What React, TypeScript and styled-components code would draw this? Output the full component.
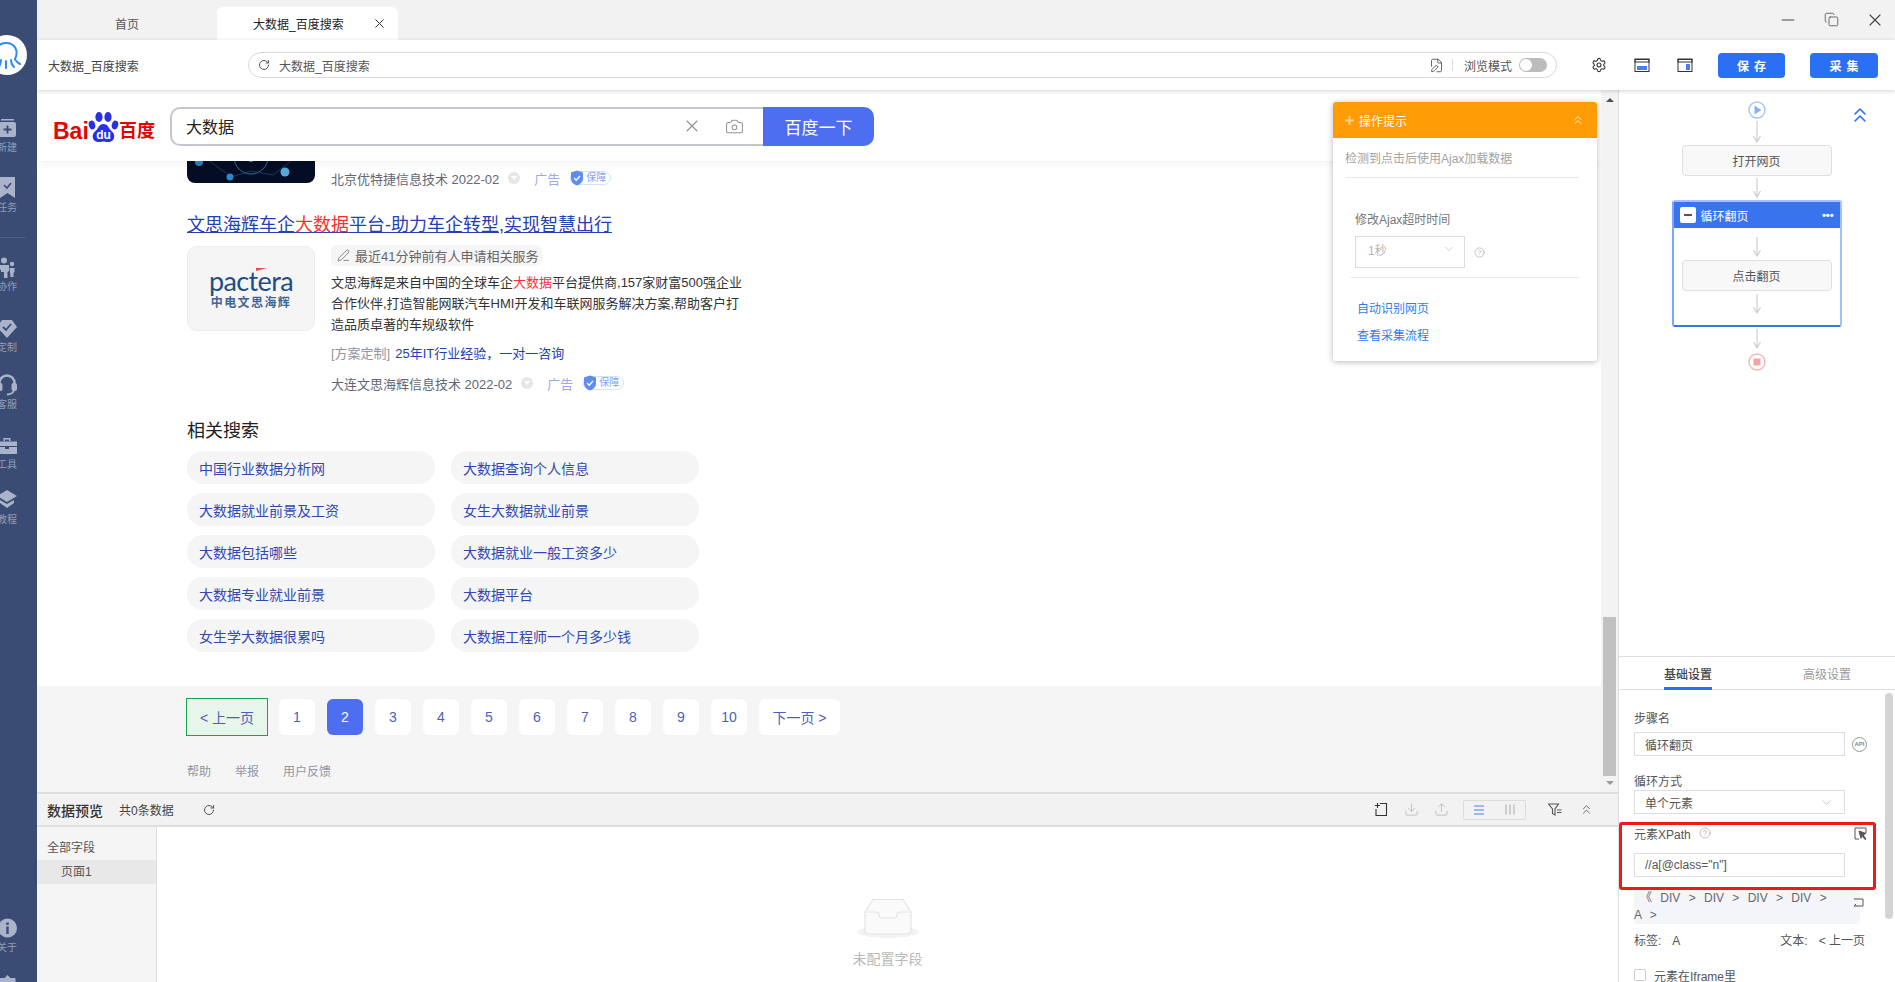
import styled, { createGlobalStyle } from "styled-components";
import {
  X,
  Minus,
  Copy,
  RotateCw,
  Settings,
  FilePen,
  Camera,
  ChevronsUp,
  ChevronDown,
  CircleHelp,
  PenLine,
  Download,
  Upload,
} from "lucide-react";

const FONT = `"Liberation Sans", "Noto Sans CJK SC", sans-serif`;

const GlobalStyle = createGlobalStyle`
  html, body {
    margin: 0;
    height: 100%;
    overflow: hidden;
    background: #fff;
    font-family: ${FONT};
    font-size: 12px;
    color: #333;
  }
  #root { height: 100%; }
  * { box-sizing: border-box; }
`;

const Shell = styled.div`
  display: flex;
  width: 100%;
  height: 982px;
  overflow: hidden;
`;

/* ---------- left rail ---------- */

const Rail = styled.nav`
  width: 37px;
  flex: none;
  height: 100%;
  background: #3a4c73;
  overflow: hidden;
  position: relative;
  z-index: 5;
`;

const RailInner = styled.div`
  display: flex;
  flex-direction: column;
  width: 38px;
  height: 100%;
  margin-left: -12px;
  padding-top: 35px;
`;

const LogoDisc = styled.div`
  width: 40px;
  height: 40px;
  margin-left: -1px;
  margin-bottom: 41px;
  border-radius: 50%;
  background: #fff;
  flex: none;
  display: flex;
  align-items: center;
  justify-content: center;
`;

const RailItem = styled.div<{ $after?: number }>`
  display: flex;
  flex-direction: column;
  align-items: center;
  flex: none;
  margin-bottom: ${(p) => p.$after ?? 21}px;
  color: #a9b3c9;
`;

const RailIcon = styled.div`
  height: 24px;
  display: flex;
  align-items: center;
  justify-content: center;
`;

const RailLabel = styled.span`
  font-size: 10px;
  line-height: 14px;
  margin-top: 1px;
  white-space: nowrap;
  color: #929db8;
`;

const RailRule = styled.div`
  height: 1px;
  width: 38px;
  background: #4d5e83;
  margin-bottom: 17px;
  flex: none;
`;

const RailBottom = styled.div`
  margin-top: auto;
  margin-bottom: -14px;
`;

/* ---------- workspace chrome ---------- */

const Workspace = styled.div`
  flex: 1;
  min-width: 0;
  display: flex;
  flex-direction: column;
`;

const TabBar = styled.div`
  height: 40px;
  flex: none;
  background: #f2f2f2;
  display: flex;
  align-items: flex-end;
`;

const Tab = styled.div<{ $active?: boolean }>`
  width: ${(p) => (p.$active ? 181 : 180)}px;
  height: 33px;
  display: flex;
  align-items: center;
  justify-content: ${(p) => (p.$active ? "flex-start" : "center")};
  padding-left: ${(p) => (p.$active ? 36 : 0)}px;
  font-size: 12px;
  background: ${(p) => (p.$active ? "#fff" : "transparent")};
  border-radius: 6px 6px 0 0;
  color: ${(p) => (p.$active ? "#222" : "#555")};
  svg {
    margin-left: 28px;
    color: #333;
  }
`;

const WindowButtons = styled.div`
  margin-left: auto;
  height: 100%;
  display: flex;
  align-items: center;
  gap: 23px;
  padding: 0 10px 1px 0;
  color: #444;
`;

const Toolbar = styled.div`
  height: 50px;
  flex: none;
  background: #fff;
  display: flex;
  align-items: center;
  box-shadow: 0 1px 4px rgba(0, 0, 0, 0.18);
  position: relative;
  z-index: 3;
`;

const PageName = styled.div`
  width: 211px;
  padding-left: 11px;
  font-size: 12px;
  color: #444;
`;

const AddressPill = styled.div`
  width: 1309px;
  height: 26px;
  flex: none;
  border: 1px solid #d9d9d9;
  border-radius: 13px;
  display: flex;
  align-items: center;
  padding: 0 9px 0 9px;
  font-size: 12px;
  color: #555;
`;

const AddressText = styled.span`
  margin-left: 9px;
  flex: 1;
`;

const PillRule = styled.span`
  width: 1px;
  height: 12px;
  background: #ddd;
  margin: 0 11px 0 8px;
`;

const Toggle = styled.span`
  width: 28px;
  height: 14px;
  border-radius: 7px;
  background: #bcbcbc;
  margin-left: 7px;
  padding: 1px;
  display: flex;
  &::before {
    content: "";
    width: 12px;
    height: 12px;
    border-radius: 50%;
    background: #fff;
  }
`;

const ToolIcons = styled.div`
  display: flex;
  align-items: center;
  margin-left: 34px;
  gap: 27px;
  color: #333;
`;

const PrimaryButton = styled.button<{ $gap: number; $w: number }>`
  width: ${(p) => p.$w}px;
  height: 25px;
  margin-left: ${(p) => p.$gap}px;
  border: 0;
  border-radius: 4px;
  background: #2a6ff5;
  color: #fff;
  font-family: ${FONT};
  font-size: 12px;
  font-weight: 700;
  letter-spacing: 5px;
  padding: 0 0 0 5px;
`;

const Body = styled.div`
  flex: 1;
  min-height: 0;
  display: flex;
`;

const LeftPane = styled.div`
  width: 1581px;
  flex: none;
  display: flex;
  flex-direction: column;
`;

const BrowserArea = styled.div`
  height: 702px;
  flex: none;
  display: flex;
`;

const Viewport = styled.div`
  flex: 1;
  min-width: 0;
  position: relative;
  display: flex;
  flex-direction: column;
  overflow: hidden;
`;

const ScrollTrack = styled.div`
  width: 17px;
  flex: none;
  background: #f3f3f3;
  display: flex;
  flex-direction: column;
  align-items: center;
  padding: 8px 0 7px;
`;

const ScrollThumb = styled.div`
  width: 13px;
  height: 159px;
  margin-top: auto;
  background: #c1c1c1;
`;

const ArrowUp = styled.div`
  width: 0;
  height: 0;
  border-left: 4px solid transparent;
  border-right: 4px solid transparent;
  border-bottom: 4px solid #505050;
`;

const ArrowDown = styled.div`
  width: 0;
  height: 0;
  margin-top: 5px;
  border-left: 4px solid transparent;
  border-right: 4px solid transparent;
  border-top: 4px solid #9a9a9a;
`;

/* ---------- baidu page ---------- */

const BaiduHeader = styled.div`
  height: 71px;
  flex: none;
  display: flex;
  align-items: center;
  padding: 1px 0 0 16px;
  background: #fff;
  box-shadow: 0 2px 8px rgba(0, 0, 0, 0.06);
  position: relative;
  z-index: 2;
`;

const BaiduLogo = styled.div`
  width: 117px;
  height: 36px;
  display: flex;
  align-items: flex-end;
  color: #e10602;
  font-weight: 700;
  flex: none;
`;

const LogoLatin = styled.span`
  font-size: 23px;
  line-height: 26px;
  width: 35px;
  flex: none;
`;

const LogoHan = styled.span`
  font-size: 18px;
  line-height: 25px;
  white-space: nowrap;
`;

const SearchBox = styled.div`
  width: 593px;
  height: 39px;
  border: 2px solid #c4c7ce;
  border-right: 0;
  border-radius: 10px 0 0 10px;
  display: flex;
  align-items: center;
  padding: 0 19px 0 14px;
  font-size: 16px;
  color: #222;
`;

const SearchText = styled.span`
  flex: 1;
`;

const SearchAction = styled.span`
  display: flex;
  color: #919399;
  margin-left: 23px;
`;

const SearchButton = styled.div`
  width: 111px;
  height: 39px;
  background: #4e6ef2;
  color: #fff;
  font-size: 17px;
  border-radius: 0 10px 10px 0;
  display: flex;
  align-items: center;
  justify-content: center;
`;

const Results = styled.div`
  flex: 1;
  min-height: 0;
  padding-left: 150px;
`;

const TopResult = styled.div`
  display: flex;
  height: 27px;
`;

const DarkThumb = styled.div`
  width: 128px;
  height: 22px;
  background: #050d24;
  border-radius: 0 0 8px 8px;
  overflow: hidden;
  flex: none;
`;

const MetaLine = styled.div`
  display: flex;
  align-items: center;
  height: 22px;
  font-size: 13px;
  color: #626675;
  white-space: nowrap;
`;

const TopMeta = styled(MetaLine)`
  margin: 7px 0 0 16px;
  height: 20px;
`;

const Dot = styled.span`
  width: 12px;
  height: 12px;
  margin-left: 9px;
  border-radius: 50%;
  background: #e6e6e6;
  display: flex;
  align-items: center;
  justify-content: center;
  &::after {
    content: "";
    border-left: 3px solid transparent;
    border-right: 3px solid transparent;
    border-top: 4px solid #fff;
  }
`;

const AdMark = styled.span`
  margin-left: 14px;
  color: #9fa9ec;
  font-size: 13px;
`;

const GuardBadge = styled.span`
  margin-left: 10px;
  height: 14px;
  padding: 0 4px 0 15px;
  border: 1px solid #d5e3ff;
  border-radius: 7px;
  position: relative;
  font-size: 10px;
  line-height: 12px;
  color: #7fa3f5;
  svg {
    position: absolute;
    left: -1px;
    top: -2px;
  }
`;

const ResultTitle = styled.a`
  display: block;
  margin-top: 25px;
  font-size: 18px;
  line-height: 24px;
  color: #2440b3;
  text-decoration: underline;
`;

const Hit = styled.span`
  color: #f73131;
`;

const ResultCard = styled.div`
  display: flex;
  gap: 16px;
  margin-top: 8px;
`;

const BrandTile = styled.div`
  width: 128px;
  height: 85px;
  margin-top: 1px;
  flex: none;
  background: #f5f5f6;
  border: 1px solid #ececec;
  border-radius: 10px;
  display: flex;
  flex-direction: column;
  align-items: center;
  justify-content: center;
  color: #1f4e87;
  position: relative;
`;

const BrandName = styled.span`
  font-size: 27px;
  line-height: 28px;
  letter-spacing: -0.6px;
  font-family: "Lato", sans-serif;
`;

const BrandSub = styled.span`
  font-size: 12px;
  line-height: 16px;
  font-weight: 700;
  letter-spacing: 1.4px;
  opacity: 0.85;
`;

const BrandFlag = styled.span`
  position: absolute;
  left: 68px;
  top: 21px;
  border-top: 3px solid #e84b4b;
  border-right: 11px solid transparent;
`;

const CardBody = styled.div`
  width: 420px;
`;

const ActivityTag = styled.div`
  display: inline-flex;
  align-items: center;
  height: 21px;
  padding: 0 4px 0 6px;
  gap: 5px;
  background: #f5f5f6;
  border-radius: 6px;
  font-size: 13px;
  color: #666;
  vertical-align: top;
`;

const Abstract = styled.p`
  margin: 6px 0 0;
  font-size: 13px;
  line-height: 21px;
  color: #333;
`;

const PromoLine = styled.div`
  margin-top: 8px;
  font-size: 13px;
  line-height: 21px;
  color: #9195a3;
  a {
    color: #2440b3;
    margin-left: 5px;
  }
`;

const CardMeta = styled(MetaLine)`
  margin-top: 8px;
`;

const RelatedTitle = styled.h3`
  margin: 25px 0 0;
  font-size: 18px;
  font-weight: 400;
  line-height: 24px;
  color: #222;
`;

const RelatedGrid = styled.div`
  margin-top: 8px;
  display: grid;
  grid-template-columns: 248px 248px;
  column-gap: 16px;
  row-gap: 9px;
`;

const RelatedPill = styled.a`
  height: 33px;
  border-radius: 16px;
  background: #f5f5f6;
  padding-left: 12px;
  display: flex;
  align-items: center;
  font-size: 14px;
  color: #3148b0;
`;

const PageFooter = styled.div`
  height: 106px;
  flex: none;
  background: #f5f5f6;
  padding: 12px 0 0 149px;
`;

const Pager = styled.div`
  display: flex;
  align-items: center;
  gap: 12px;
`;

const PageButton = styled.a<{ $current?: boolean }>`
  width: 36px;
  height: 36px;
  border-radius: 6px;
  background: ${(p) => (p.$current ? "#4e6ef2" : "#fff")};
  color: ${(p) => (p.$current ? "#fff" : "#4e5fb8")};
  font-size: 14px;
  display: flex;
  align-items: center;
  justify-content: center;
`;

const PrevButton = styled.a`
  width: 82px;
  height: 38px;
  margin-right: -1px;
  border: 1px solid #12a84a;
  background: #e8f5ea;
  color: #4e5fb8;
  font-size: 14px;
  display: flex;
  align-items: center;
  justify-content: center;
`;

const NextButton = styled(PageButton)`
  width: 81px;
`;

const FooterLinks = styled.div`
  margin-top: 26px;
  display: flex;
  gap: 24px;
  font-size: 12px;
  color: #9195a3;
  padding-left: 1px;
`;

/* ---------- tips popover ---------- */

const TipsCard = styled.aside`
  position: absolute;
  left: 1296px;
  top: 12px;
  width: 264px;
  height: 259px;
  background: #fff;
  border-radius: 3px;
  box-shadow: 0 1px 6px rgba(0, 0, 0, 0.28);
  z-index: 4;
`;

const TipsHead = styled.div`
  height: 36px;
  background: #ff9b05;
  border-radius: 3px 3px 0 0;
  color: #fff;
  font-size: 12px;
  display: flex;
  align-items: center;
  justify-content: space-between;
  padding: 0 12px;
`;

const TipsHeadLeft = styled.span`
  display: flex;
  align-items: center;
  gap: 5px;
  color: #fff;
  svg {
    opacity: 0.55;
  }
`;

const TipsNote = styled.div`
  margin: 0 18px 0 12px;
  height: 40px;
  border-bottom: 1px solid #e8e8e8;
  display: flex;
  align-items: center;
  font-size: 12px;
  color: #a3a3a3;
  white-space: nowrap;
`;

const TipsLabel = styled.div`
  margin: 34px 0 0 22px;
  font-size: 12px;
  line-height: 16px;
  color: #777;
`;

const TipsSelectRow = styled.div`
  display: flex;
  align-items: center;
  margin: 8px 0 0 22px;
  gap: 9px;
  color: #999;
`;

const TipsSelect = styled.div`
  width: 110px;
  height: 32px;
  border: 1px solid #ddd;
  display: flex;
  align-items: center;
  justify-content: space-between;
  padding: 0 8px 6px 12px;
  font-size: 12px;
  color: #b5b5b5;
`;

const TipsRule = styled.div`
  margin: 9px 18px 0;
  height: 1px;
  background: #e8e8e8;
`;

const TipsLink = styled.a<{ $first?: boolean }>`
  display: block;
  margin: ${(p) => (p.$first ? 23 : 11)}px 0 0 24px;
  font-size: 12px;
  line-height: 16px;
  color: #2f7bf0;
`;

/* ---------- data preview ---------- */

const Preview = styled.section`
  flex: 1;
  min-height: 0;
  display: flex;
  flex-direction: column;
`;

const PreviewHead = styled.div`
  height: 35px;
  flex: none;
  background: #f2f2f2;
  border-top: 2px solid #dedede;
  border-bottom: 2px solid #dedede;
  display: flex;
  align-items: center;
  padding-left: 10px;
`;

const PreviewTitle = styled.strong`
  font-size: 14px;
  font-weight: 500;
  color: #333;
`;

const PreviewCount = styled.span`
  margin-left: 16px;
  font-size: 12px;
  color: #444;
`;

const RefreshSlot = styled.span`
  display: flex;
  margin-left: 29px;
  color: #555;
`;

const PreviewTools = styled.div`
  margin-left: auto;
  display: flex;
  align-items: center;
  padding-right: 24px;
`;

const ToolSlot = styled.span<{ $left: number; $muted?: boolean }>`
  display: flex;
  margin-left: ${(p) => p.$left}px;
  color: ${(p) => (p.$muted ? "#b4b4b4" : "#333")};
`;

const Segmented = styled.div`
  width: 63px;
  height: 20px;
  margin-left: 14px;
  border: 1px solid #dcdcdc;
  border-radius: 2px;
  display: grid;
  grid-template-columns: 1fr 1fr;
  align-items: center;
  justify-items: center;
`;

const PreviewBody = styled.div`
  flex: 1;
  min-height: 0;
  display: flex;
`;

const FieldColumn = styled.div`
  width: 120px;
  flex: none;
  background: #f5f5f5;
  border-right: 1px solid #dedede;
  padding-top: 12px;
  font-size: 12px;
  color: #555;
`;

const FieldAll = styled.div`
  height: 18px;
  line-height: 18px;
  padding-left: 10px;
`;

const FieldRow = styled.div`
  margin-top: 3px;
  height: 24px;
  line-height: 24px;
  padding-left: 24px;
  background: #e8e8e8;
`;

const EmptyState = styled.div`
  flex: 1;
  display: flex;
  flex-direction: column;
  align-items: center;
  padding-top: 72px;
  font-size: 14px;
  color: #b9b9b9;
  gap: 9px;
`;

/* ---------- right column ---------- */

const RightPane = styled.div`
  flex: 1;
  min-width: 0;
  border-left: 1px solid #dedede;
  display: flex;
  flex-direction: column;
  position: relative;
  overflow: hidden;
`;

const FlowCanvas = styled.div`
  height: 566px;
  flex: none;
  position: relative;
  display: flex;
  flex-direction: column;
  align-items: center;
  padding: 11px 1px 0 0;
`;

const CollapseFlow = styled.span`
  position: absolute;
  left: 229px;
  top: 13px;
  display: flex;
  color: #2a6ff5;
`;

const FlowStep = styled.div<{ $inner?: boolean }>`
  width: 150px;
  height: 31px;
  flex: none;
  margin-top: ${(p) => (p.$inner ? -6 : 0)}px;
  border: 1px solid #dfdfdf;
  border-radius: 4px;
  background: #f8f8f8;
  display: flex;
  align-items: center;
  justify-content: center;
  font-size: 12px;
  color: #555;
`;

const LoopBox = styled.div`
  width: 170px;
  height: 127px;
  flex: none;
  border: 2px solid #3a73ee;
  border-top-color: #a5c0f7;
  border-left-color: #7fa5f3;
  border-right-color: #a5c0f7;
  border-radius: 3px;
  display: flex;
  flex-direction: column;
  align-items: center;
`;

const LoopHead = styled.div`
  width: 100%;
  height: 26px;
  flex: none;
  background: #3a73ee;
  color: #fff;
  font-size: 12px;
  display: flex;
  align-items: center;
  padding: 0 6px;
  gap: 5px;
`;

const LoopToggle = styled.span`
  width: 16px;
  height: 16px;
  background: #fff;
  border-radius: 2px;
  display: flex;
  align-items: center;
  justify-content: center;
  &::after {
    content: "";
    width: 8px;
    height: 2px;
    background: #555;
  }
`;

const LoopMenu = styled.span`
  margin-left: auto;
  font-size: 11px;
  font-weight: 700;
  line-height: 8px;
`;

const SettingsTabs = styled.div`
  height: 34px;
  flex: none;
  border-top: 1px solid #dedede;
  border-bottom: 1px solid #dedede;
  display: flex;
  font-size: 12px;
  padding-left: 45px;
`;

const SettingsTab = styled.div<{ $active?: boolean }>`
  height: 33px;
  width: 48px;
  margin-right: 91px;
  display: flex;
  align-items: center;
  white-space: nowrap;
  color: ${(p) => (p.$active ? "#444" : "#999")};
  font-weight: ${(p) => (p.$active ? 500 : 400)};
  border-bottom: 3px solid ${(p) => (p.$active ? "#2a6ff5" : "transparent")};
  padding-top: 3px;
`;

const Form = styled.div`
  flex: 1;
  min-height: 0;
  padding: 21px 0 0 15px;
  font-size: 12px;
  color: #555;
  position: relative;
`;

const FieldLabel = styled.div<{ $top?: number; $bottom?: number }>`
  height: 16px;
  line-height: 16px;
  margin-top: ${(p) => p.$top ?? 0}px;
  margin-bottom: ${(p) => p.$bottom ?? 0}px;
  color: #555;
`;

const FieldRowLine = styled.div`
  display: flex;
  align-items: center;
  gap: 7px;
  color: #999;
`;

const TextField = styled.div`
  width: 211px;
  height: 24px;
  border: 1px solid #dedede;
  padding: 0 10px 0 10px;
  display: flex;
  align-items: center;
  justify-content: space-between;
  font-size: 12px;
  color: #555;
  background: #fff;
  flex: none;
`;

const ApiBadge = styled.span`
  width: 15px;
  height: 15px;
  border: 1px solid #999;
  border-radius: 50%;
  display: flex;
  align-items: center;
  justify-content: center;
  font-size: 6px;
  font-weight: 700;
  color: #888;
`;

const HighlightBox = styled.div`
  width: 257px;
  height: 68px;
  margin: 8px 0 0 -15px;
  padding: 0 0 0 12px;
  border: 3px solid #f01a14;
  border-radius: 3px;
  position: relative;
  z-index: 1;
`;

const XPathHead = styled.div`
  height: 16px;
  margin-bottom: 12px;
  display: flex;
  align-items: center;
  justify-content: space-between;
  padding-right: 6px;
`;

const XPathName = styled.span`
  display: flex;
  align-items: center;
  gap: 8px;
  color: #999;
  span {
    color: #555;
  }
`;

const Crumbs = styled.div`
  width: 226px;
  height: 34px;
  background: #f4f5f9;
  border-radius: 0 0 4px 4px;
  position: relative;
  font-size: 12px;
  line-height: 17px;
  color: #667;
`;

const CrumbLine = styled.div<{ $indent?: number }>`
  height: 17px;
  padding-left: ${(p) => p.$indent ?? 0}px;
  white-space: nowrap;
  word-spacing: 5px;
`;

const CrumbReturn = styled.span`
  position: absolute;
  right: -4px;
  top: 8px;
  display: flex;
  color: #555;
`;

const InfoRow = styled.div`
  width: 231px;
  height: 16px;
  line-height: 16px;
  margin-top: 9px;
  display: flex;
  justify-content: space-between;
`;

const InfoValue = styled.span`
  margin-left: 11px;
`;

const CheckRow = styled.label`
  margin-top: 18px;
  display: flex;
  align-items: center;
  gap: 8px;
  height: 16px;
`;

const CheckBox = styled.span`
  width: 12px;
  height: 12px;
  border: 1px solid #ccc;
  border-radius: 2px;
`;

const FormScroll = styled.div`
  position: absolute;
  right: 2px;
  top: 3px;
  width: 8px;
  height: 226px;
  border-radius: 4px;
  background: #d4d4d4;
`;

/* ---------- drawings ---------- */

const OctopusMark = () => (
  <svg width="36" height="36" viewBox="0 0 36 36" fill="none" stroke="#2e8bf0" strokeWidth="2" strokeLinecap="round">
    <path d="M8 22C4 14 8 6 17 6s13 8 9 16" />
    <path d="M8 22c-1 3-3 4-4 6M12 23c0 3-1 5-2 7M17 24v7M22 23c0 3 1 5 3 7M26 22c1 3 3 4 5 5" />
  </svg>
);

const Paw = () => (
  <svg width="31" height="32" viewBox="0 0 31 32" style={{ flex: "none" }}>
    <g fill="#2932e1">
      <ellipse cx="4" cy="13" rx="3.2" ry="4.5" transform="rotate(-15 4 13)" />
      <ellipse cx="11" cy="5" rx="3.6" ry="5" />
      <ellipse cx="20" cy="5" rx="3.6" ry="5" />
      <ellipse cx="27" cy="13" rx="3.2" ry="4.5" transform="rotate(15 27 13)" />
      <path d="M15.5 12c5 0 5 5 9 8 4 4 1 11-5 10-2-.3-2.800-.6-4-.6s-2 .3-4 .6c-6 1-9-6-5-10 4-3 4-8 9-8z" />
    </g>
    <text x="15.500" y="27" textAnchor="middle" fontSize="12" fontWeight="700" fontFamily="Liberation Sans, sans-serif" fill="#fff">
      du
    </text>
  </svg>
);

const NetworkArt = () => (
  <svg width="128" height="22" viewBox="0 0 128 22" fill="none">
    <circle cx="64" cy="-4" r="17" stroke="#2e6f9e" strokeWidth="1" />
    <path d="M22 0l20 14M104 0L86 14M44 16l20-6 22 4" stroke="#1f4e75" strokeWidth="0.7" />
    <circle cx="12" cy="1" r="4" fill="#2f7fc4" />
    <circle cx="43" cy="16" r="3.500" fill="#2f86cc" />
    <circle cx="98" cy="11" r="4.500" fill="#58a8d8" />
    <circle cx="64" cy="-2" r="3" fill="#3a86b8" />
  </svg>
);

const Shield = () => (
  <svg width="14" height="16" viewBox="0 0 14 16">
    <path d="M7 .5l6 2v6c0 3.500-3 6-6 7-3-1-6-3.500-6-7v-6z" fill="#5e8df2" />
    <path d="M4 8l2.200 2.200L10 6" fill="none" stroke="#fff" strokeWidth="1.300" />
  </svg>
);

const Arrow = ({ h = 20, m = 2 }: { h?: number; m?: number }) => (
  <svg width="10" height={h} viewBox={`0 0 10 ${h}`} style={{ margin: `${m}px 0`, flex: "none" }} fill="none" stroke="#cfcfcf" strokeWidth="1.200">
    <path d={`M5 0v${h - 1}M1.500 ${h - 7}L5 ${h - 1}l3.500-6`} />
  </svg>
);

const StartNode = () => (
  <svg width="18" height="18" viewBox="0 0 18 18" style={{ flex: "none" }}>
    <circle cx="9" cy="9" r="8" fill="#fff" stroke="#a9c4f6" strokeWidth="1.400" />
    <path d="M6.500 4.500v9l7-4.500z" fill="#8db1f5" />
  </svg>
);

const StopNode = () => (
  <svg width="18" height="18" viewBox="0 0 18 18" style={{ flex: "none", marginTop: 2 }}>
    <circle cx="9" cy="9" r="8" fill="#fff" stroke="#f4b8b8" strokeWidth="1.400" />
    <rect x="5.500" y="5.500" width="7" height="7" fill="#f2a5a5" />
  </svg>
);

const PaneBottomIcon = () => (
  <svg width="16" height="15" viewBox="0 0 16 15">
    <rect x="1" y="1.500" width="14" height="12" fill="none" stroke="#333" strokeWidth="1" />
    <rect x="1" y="1" width="14" height="3" fill="none" stroke="#333" />
    <rect x="3" y="8" width="10" height="4" fill="#4a7ef0" />
  </svg>
);

const PaneSideIcon = () => (
  <svg width="16" height="15" viewBox="0 0 16 15">
    <rect x="1" y="1.500" width="14" height="12" fill="none" stroke="#333" strokeWidth="1" />
    <rect x="1" y="1" width="14" height="3" fill="none" stroke="#333" />
    <rect x="9" y="6" width="4" height="6" fill="#4a7ef0" />
  </svg>
);

const NewPageIcon = () => (
  <svg width="14" height="15" viewBox="0 0 14 15" fill="none" stroke="#333" strokeWidth="1.100">
    <path d="M6 1.500h6.500v12H2V7M1 3.500h5M3.500 1v5" />
  </svg>
);

const RowsIcon = () => (
  <svg width="12" height="10" viewBox="0 0 12 10" fill="none" stroke="#4a7ef0" strokeWidth="1">
    <path d="M1 1h10M1 5h10M1 9h10" />
  </svg>
);

const ColumnsIcon = () => (
  <svg width="10" height="11" viewBox="0 0 10 11" fill="none" stroke="#aaa" strokeWidth="1">
    <path d="M1 .5v10M5 .5v10M9 .5v10" />
  </svg>
);

const FilterIcon = () => (
  <svg width="14" height="13" viewBox="0 0 14 13" fill="none" stroke="#555" strokeWidth="1.100">
    <path d="M.5 1h10L7 6v6L4.500 10.500V6zM9 7h4.500M9 9.500h4.500" />
  </svg>
);

const PickIcon = () => (
  <svg width="13" height="13" viewBox="0 0 13 13" fill="none" stroke="#555" strokeWidth="1">
    <path d="M5 12H1V1h11v5" />
    <path d="M5 4l7 2.500-3 1.200L12 12l-1 .5-3-4-1 2.800z" fill="#555" />
  </svg>
);

const ReturnIcon = () => (
  <svg width="10" height="10" viewBox="0 0 10 10" fill="none" stroke="#555" strokeWidth="1">
    <path d="M0 1h9v7H0M0 8l2-2" />
  </svg>
);

const EmptyTray = () => (
  <svg width="64" height="40" viewBox="0 0 64 40" style={{ flex: "none" }}>
    <ellipse cx="32" cy="33" rx="31" ry="6" fill="#f3f3f3" />
    <path d="M17 .5h30L55 13v19a3 3 0 0 1-3 3H12a3 3 0 0 1-3-3V13z" fill="#fafafa" stroke="#e4e4e4" strokeWidth="1.200" />
    <path d="M9 13h12c1 0 2 1 2 3s1 3 3 3h12c2 0 3-1 3-3s1-3 2-3h12" fill="none" stroke="#e4e4e4" strokeWidth="1.200" />
  </svg>
);

const railIcons: Record<string, React.ReactNode> = {
  add: (
    <svg width="19" height="18" viewBox="0 0 19 18">
      <rect x="1" y="3" width="17" height="15" rx="2" fill="currentColor" />
      <rect x="3" y="0" width="13" height="1.500" fill="currentColor" />
      <path d="M9.500 6.500v8M5.500 10.500h8" stroke="#3a4c73" strokeWidth="1.800" />
    </svg>
  ),
  task: (
    <svg width="17" height="22" viewBox="0 0 17 22">
      <path d="M1 0h15v21l-7.500-5L1 21z" fill="currentColor" />
      <path d="M5 8l3 3 4-5" stroke="#3a4c73" strokeWidth="1.600" fill="none" />
    </svg>
  ),
  team: (
    <svg width="20" height="21" viewBox="0 0 20 21" fill="currentColor">
      <circle cx="7" cy="3.500" r="3" />
      <path d="M2 8h10v6l-1.500 1v6H7V15H4v-2L2 12z" />
      <circle cx="15" cy="7" r="2.200" />
      <path d="M12.500 11h5v4l-1 1v4h-3z" />
    </svg>
  ),
  custom: (
    <svg width="20" height="19" viewBox="0 0 20 19">
      <path d="M5 1h10l5 7-10 11L0 8z" fill="currentColor" />
      <path d="M6 8l3 3 5-6" stroke="#3a4c73" strokeWidth="1.800" fill="none" />
    </svg>
  ),
  service: (
    <svg width="20" height="22" viewBox="0 0 20 22" fill="none" stroke="currentColor" strokeWidth="2.600">
      <path d="M2.500 12V9a7.500 7.500 0 0 1 15 0v3" />
      <rect x="0" y="9" width="5.500" height="8" rx="2" fill="currentColor" stroke="none" />
      <rect x="14.500" y="9" width="5.500" height="8" rx="2" fill="currentColor" stroke="none" />
      <path d="M17 16c-1 3.500-3 4.500-7 4.500" strokeWidth="1.800" />
    </svg>
  ),
  tool: (
    <svg width="20" height="17" viewBox="0 0 20 17" fill="currentColor">
      <path d="M6.500 4V1h7v3M8 4V2.500h4V4z" fillRule="evenodd" />
      <path d="M0 4.500h20V9H0zM0 10h8v2h4v-2h8v7H0z" />
    </svg>
  ),
  guide: (
    <svg width="20" height="20" viewBox="0 0 20 20" fill="currentColor">
      <path d="M10 0l10 6-10 6L0 6z" />
      <path d="M3 10l7 4 7-4v3l-7 5-7-5z" />
    </svg>
  ),
  about: (
    <svg width="19" height="20" viewBox="0 0 19 20">
      <circle cx="9.500" cy="10" r="9.500" fill="currentColor" />
      <rect x="8.300" y="8.500" width="2.400" height="7.500" fill="#3a4c73" />
      <rect x="8.300" y="4.500" width="2.400" height="2.400" fill="#3a4c73" />
    </svg>
  ),
  gear: (
    <svg width="19" height="19" viewBox="0 0 19 19" fill="currentColor">
      <path d="M9.500 0l3 3h5v16h-16V3h5z" />
    </svg>
  ),
};

const railTop = [
  { key: "add", label: "新建", after: 21 },
  { key: "task", label: "任务", after: 22 },
];

const railMiddle = [
  { key: "team", label: "协作", after: 22 },
  { key: "custom", label: "定制", after: 18 },
  { key: "service", label: "客服", after: 21 },
  { key: "tool", label: "工具", after: 16 },
  { key: "guide", label: "教程", after: 0 },
];

const relatedSearches = [
  "中国行业数据分析网",
  "大数据查询个人信息",
  "大数据就业前景及工资",
  "女生大数据就业前景",
  "大数据包括哪些",
  "大数据就业一般工资多少",
  "大数据专业就业前景",
  "大数据平台",
  "女生学大数据很累吗",
  "大数据工程师一个月多少钱",
];

const pages = [1, 2, 3, 4, 5, 6, 7, 8, 9, 10];

const App = () => {
  return (
    <Shell>
      <GlobalStyle />
      <Rail>
        <RailInner>
          <LogoDisc>
            <OctopusMark />
          </LogoDisc>
          {railTop.map((item) => (
            <RailItem key={item.key} $after={item.after}>
              <RailIcon>{railIcons[item.key]}</RailIcon>
              <RailLabel>{item.label}</RailLabel>
            </RailItem>
          ))}
          <RailRule />
          {railMiddle.map((item) => (
            <RailItem key={item.key} $after={item.after}>
              <RailIcon>{railIcons[item.key]}</RailIcon>
              <RailLabel>{item.label}</RailLabel>
            </RailItem>
          ))}
          <RailBottom>
            <RailItem $after={17}>
              <RailIcon>{railIcons.about}</RailIcon>
              <RailLabel>关于</RailLabel>
            </RailItem>
            <RailItem $after={0}>
              <RailIcon>{railIcons.gear}</RailIcon>
            </RailItem>
          </RailBottom>
        </RailInner>
      </Rail>

      <Workspace>
        <TabBar>
          <Tab>首页</Tab>
          <Tab $active>
            大数据_百度搜索
            <X size={15} strokeWidth={1.6} />
          </Tab>
          <WindowButtons>
            <Minus size={20} strokeWidth={1.2} />
            <Copy size={15} strokeWidth={1.2} style={{ margin: "0 3px" }} />
            <X size={20} strokeWidth={1.3} />
          </WindowButtons>
        </TabBar>

        <Toolbar>
          <PageName>大数据_百度搜索</PageName>
          <AddressPill>
            <RotateCw size={12} color="#555" />
            <AddressText>大数据_百度搜索</AddressText>
            <FilePen size={15} strokeWidth={1.3} color="#444" />
            <PillRule />
            <span>浏览模式</span>
            <Toggle />
          </AddressPill>
          <ToolIcons>
            <Settings size={16} strokeWidth={1.6} />
            <PaneBottomIcon />
            <PaneSideIcon />
          </ToolIcons>
          <PrimaryButton $gap={25} $w={67}>
            保存
          </PrimaryButton>
          <PrimaryButton $gap={25} $w={68}>
            采集
          </PrimaryButton>
        </Toolbar>

        <Body>
          <LeftPane>
            <BrowserArea>
              <Viewport>
                <BaiduHeader>
                  <BaiduLogo>
                    <LogoLatin>Bai</LogoLatin>
                    <Paw />
                    <LogoHan>百度</LogoHan>
                  </BaiduLogo>
                  <SearchBox>
                    <SearchText>大数据</SearchText>
                    <SearchAction>
                      <X size={20} strokeWidth={1.4} />
                    </SearchAction>
                    <SearchAction>
                      <Camera size={19} strokeWidth={1.3} />
                    </SearchAction>
                  </SearchBox>
                  <SearchButton>百度一下</SearchButton>
                </BaiduHeader>

                <Results>
                  <TopResult>
                    <DarkThumb>
                      <NetworkArt />
                    </DarkThumb>
                    <TopMeta>
                      北京优特捷信息技术 2022-02
                      <Dot />
                      <AdMark>广告</AdMark>
                      <GuardBadge>
                        <Shield />
                        保障
                      </GuardBadge>
                    </TopMeta>
                  </TopResult>

                  <ResultTitle>
                    文思海辉车企<Hit>大数据</Hit>平台-助力车企转型,实现智慧出行
                  </ResultTitle>
                  <ResultCard>
                    <BrandTile>
                      <BrandFlag />
                      <BrandName>pactera</BrandName>
                      <BrandSub>中电文思海辉</BrandSub>
                    </BrandTile>
                    <CardBody>
                      <ActivityTag>
                        <PenLine size={13} strokeWidth={1.4} />
                        最近41分钟前有人申请相关服务
                      </ActivityTag>
                      <Abstract>
                        文思海辉是来自中国的全球车企<Hit>大数据</Hit>平台提供商,157家财富500强企业合作伙伴,打造智能网联汽车HMI开发和车联网服务解决方案,帮助客户打造品质卓著的车规级软件
                      </Abstract>
                      <PromoLine>
                        [方案定制]
                        <a>{"25年IT行业经验\uFF0C一对一咨询"}</a>
                      </PromoLine>
                      <CardMeta>
                        大连文思海辉信息技术 2022-02
                        <Dot />
                        <AdMark>广告</AdMark>
                        <GuardBadge>
                          <Shield />
                          保障
                        </GuardBadge>
                      </CardMeta>
                    </CardBody>
                  </ResultCard>

                  <RelatedTitle>相关搜索</RelatedTitle>
                  <RelatedGrid>
                    {relatedSearches.map((term) => (
                      <RelatedPill key={term}>{term}</RelatedPill>
                    ))}
                  </RelatedGrid>
                </Results>

                <PageFooter>
                  <Pager>
                    <PrevButton>&lt; 上一页</PrevButton>
                    {pages.map((n) => (
                      <PageButton key={n} $current={n === 2}>
                        {n}
                      </PageButton>
                    ))}
                    <NextButton>下一页 &gt;</NextButton>
                  </Pager>
                  <FooterLinks>
                    <span>帮助</span>
                    <span>举报</span>
                    <span>用户反馈</span>
                  </FooterLinks>
                </PageFooter>

                <TipsCard>
                  <TipsHead>
                    <TipsHeadLeft>
                      <svg width="9" height="9" viewBox="0 0 10 10">
                        <path d="M5 0v10M0 5h10" stroke="#fff" strokeWidth="2" />
                      </svg>
                      操作提示
                    </TipsHeadLeft>
                    <ChevronsUp size={14} strokeWidth={1.5} />
                  </TipsHead>
                  <TipsNote>检测到点击后使用Ajax加载数据</TipsNote>
                  <TipsLabel>修改Ajax超时时间</TipsLabel>
                  <TipsSelectRow>
                    <TipsSelect>
                      1秒
                      <ChevronDown size={14} strokeWidth={1} />
                    </TipsSelect>
                    <CircleHelp size={11} strokeWidth={1.2} />
                  </TipsSelectRow>
                  <TipsRule />
                  <TipsLink $first>自动识别网页</TipsLink>
                  <TipsLink>查看采集流程</TipsLink>
                </TipsCard>
              </Viewport>
              <ScrollTrack>
                <ArrowUp />
                <ScrollThumb />
                <ArrowDown />
              </ScrollTrack>
            </BrowserArea>

            <Preview>
              <PreviewHead>
                <PreviewTitle>数据预览</PreviewTitle>
                <PreviewCount>共0条数据</PreviewCount>
                <RefreshSlot>
                  <RotateCw size={12} />
                </RefreshSlot>
                <PreviewTools>
                  <ToolSlot $left={0}>
                    <NewPageIcon />
                  </ToolSlot>
                  <ToolSlot $left={16} $muted>
                    <Download size={15} strokeWidth={1.2} />
                  </ToolSlot>
                  <ToolSlot $left={15} $muted>
                    <Upload size={15} strokeWidth={1.2} />
                  </ToolSlot>
                  <Segmented>
                    <RowsIcon />
                    <ColumnsIcon />
                  </Segmented>
                  <ToolSlot $left={22}>
                    <FilterIcon />
                  </ToolSlot>
                  <ToolSlot $left={17}>
                    <ChevronsUp size={15} strokeWidth={1.1} />
                  </ToolSlot>
                </PreviewTools>
              </PreviewHead>
              <PreviewBody>
                <FieldColumn>
                  <FieldAll>全部字段</FieldAll>
                  <FieldRow>页面1</FieldRow>
                </FieldColumn>
                <EmptyState>
                  <EmptyTray />
                  未配置字段
                </EmptyState>
              </PreviewBody>
            </Preview>
          </LeftPane>

          <RightPane>
            <FlowCanvas>
              <CollapseFlow>
                <ChevronsUp size={24} strokeWidth={1.6} />
              </CollapseFlow>
              <StartNode />
              <Arrow h={22} />
              <FlowStep>打开网页</FlowStep>
              <Arrow />
              <LoopBox>
                <LoopHead>
                  <LoopToggle />
                  循环翻页
                  <LoopMenu>•••</LoopMenu>
                </LoopHead>
                <Arrow h={20} m={9} />
                <FlowStep $inner>点击翻页</FlowStep>
                <Arrow h={20} m={3} />
              </LoopBox>
              <Arrow />
              <StopNode />
            </FlowCanvas>

            <SettingsTabs>
              <SettingsTab $active>基础设置</SettingsTab>
              <SettingsTab>高级设置</SettingsTab>
            </SettingsTabs>

            <Form>
              <FormScroll />
              <FieldLabel $bottom={5}>步骤名</FieldLabel>
              <FieldRowLine>
                <TextField>循环翻页</TextField>
                <ApiBadge>API</ApiBadge>
              </FieldRowLine>
              <FieldLabel $top={18}>循环方式</FieldLabel>
              <TextField>
                单个元素
                <ChevronDown size={15} strokeWidth={1} color="#aaa" />
              </TextField>

              <HighlightBox>
                <XPathHead>
                  <XPathName>
                    <span>元素XPath</span>
                    <CircleHelp size={12} strokeWidth={1.2} />
                  </XPathName>
                  <PickIcon />
                </XPathHead>
                <TextField>{'//a[@class="n"]'}</TextField>
              </HighlightBox>

              <Crumbs>
                <CrumbLine $indent={6}>《 DIV &gt; DIV &gt; DIV &gt; DIV &gt;</CrumbLine>
                <CrumbLine>A &gt;</CrumbLine>
                <CrumbReturn>
                  <ReturnIcon />
                </CrumbReturn>
              </Crumbs>

              <InfoRow>
                <span>
                  标签:<InfoValue>A</InfoValue>
                </span>
                <span>
                  文本:<InfoValue>&lt; 上一页</InfoValue>
                </span>
              </InfoRow>

              <CheckRow>
                <CheckBox />
                元素在Iframe里
              </CheckRow>
            </Form>
          </RightPane>
        </Body>
      </Workspace>
    </Shell>
  );
};

export default App;
